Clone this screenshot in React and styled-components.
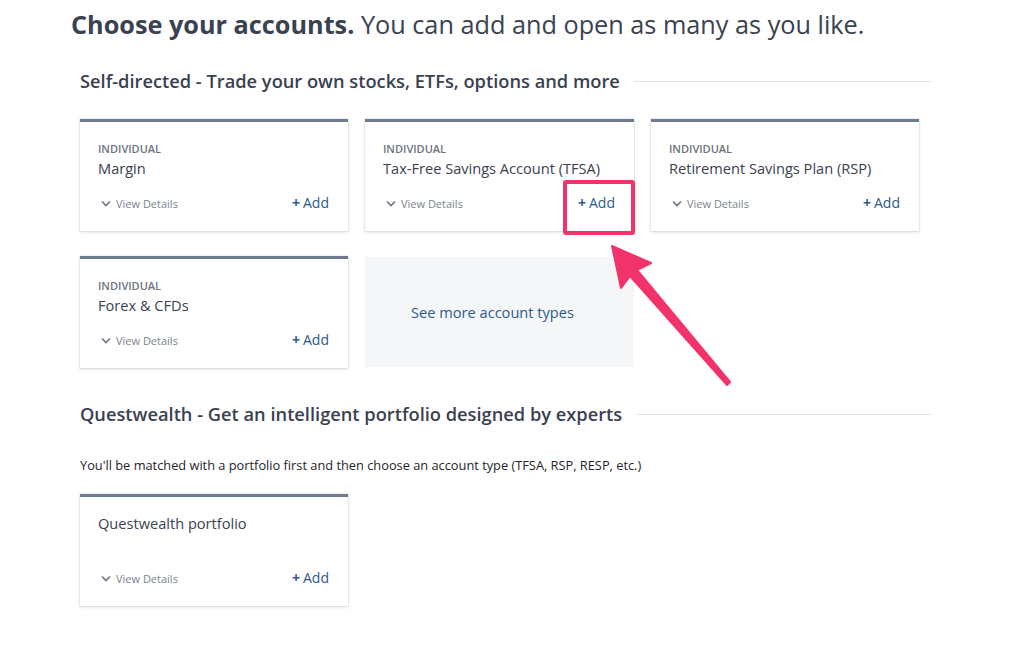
import styled, { createGlobalStyle } from "styled-components";

const GlobalStyle = createGlobalStyle`
  body {
    margin: 0;
    background: #fff;
    font-family: "Open Sans", "Liberation Sans", sans-serif;
    color: #3a4150;
  }
`;

const Page = styled.div`
  position: relative;
  width: 1024px;
  height: 661px;
  overflow: hidden;
  padding-top: 7px;
  box-sizing: border-box;
`;

const Title = styled.h1`
  margin: 0 0 0 71px;
  font-size: 25.25px;
  line-height: 34px;
  font-weight: 400;
  color: #3a4150;

  b {
    font-weight: 700;
  }
`;

const Section = styled.section`
  width: 852px;
  margin-left: 80px;
  margin-top: ${(p) => p.top}px;
`;

const HeadRow = styled.div`
  display: flex;
  align-items: center;
  gap: 14px;
`;

const Heading = styled.h2`
  margin: 0;
  font-size: 18.25px;
  line-height: 26px;
  font-weight: 600;
  color: #3a4150;
  white-space: nowrap;
`;

const Rule = styled.div`
  flex: 1;
  height: 1px;
  background: #e3e5e8;
`;

const Grid = styled.div`
  display: grid;
  grid-template-columns: 268px 269px 268px;
  column-gap: 17px;
  row-gap: 25px;
  margin-top: ${(p) => p.top}px;
`;

const Card = styled.div`
  position: relative;
  height: 112px;
  box-sizing: border-box;
  border-top: 3px solid #6d7b8e;
  background: #fff;
  box-shadow: 0 1px 3px rgba(40, 50, 70, 0.18), 0 0 0 1px rgba(40, 50, 70, 0.05);
  padding: ${(p) => p.padTop}px 19px 16px 18px;
  display: flex;
  flex-direction: column;
`;

const Label = styled.div`
  font-size: 11px;
  line-height: 16px;
  font-weight: 600;
  color: #6c7480;
  text-transform: uppercase;
`;

const Name = styled.div`
  font-size: 14.6px;
  line-height: 22px;
  color: #3a4150;
  white-space: nowrap;
`;

const Footer = styled.div`
  margin-top: auto;
  display: flex;
  align-items: center;
  justify-content: space-between;
  height: 24px;
`;

const Details = styled.div`
  display: flex;
  align-items: center;
  gap: 5px;
  padding-left: 3px;
  font-size: 11px;
  color: #7b838f;
`;

const Add = styled.div`
  position: relative;
  font-size: 14px;
  line-height: 24px;
  color: #2c5a8c;

  span {
    font-weight: 700;
    margin-right: 3px;
  }

  ${(p) =>
    p.highlight &&
    `
    &::after {
      content: "";
      position: absolute;
      left: -15px;
      right: -20px;
      top: -11px;
      bottom: -20px;
      border: 4px solid #f2336b;
      border-radius: 3px;
    }
  `}
`;

const MoreBox = styled.div`
  height: 110px;
  margin-top: 1px;
  padding-right: 14px;
  background: #f5f6f8;
  display: flex;
  align-items: center;
  justify-content: center;
  font-size: 14.6px;
  color: #2c5a8c;
`;

const Note = styled.p`
  margin: 28px 0 0;
  font-size: 12.8px;
  line-height: 20px;
  color: #1f232a;
`;

const Arrow = styled.svg`
  position: absolute;
  left: 0;
  top: 0;
  pointer-events: none;
`;

const Chevron = () => (
  <svg width="10" height="7" viewBox="0 0 10 7">
    <polyline points="1,1.5 5,5.5 9,1.5" fill="none" stroke="#6c7480" strokeWidth="1.6" />
  </svg>
);

function AccountCard({ label, name, highlight, padTop = 19 }) {
  return (
    <Card padTop={padTop}>
      {label && <Label>{label}</Label>}
      <Name>{name}</Name>
      <Footer>
        <Details>
          <Chevron />
          View Details
        </Details>
        <Add highlight={highlight}>
          <span>+</span>Add
        </Add>
      </Footer>
    </Card>
  );
}

export default function App() {
  return (
    <>
      <GlobalStyle />
      <Page>
        <Title>
          <b>Choose your accounts.</b> You can add and open as many as you like.
        </Title>

        <Section top={27}>
          <HeadRow>
            <Heading>Self-directed - Trade your own stocks, ETFs, options and more</Heading>
            <Rule />
          </HeadRow>
          <Grid top={25}>
            <AccountCard label="Individual" name="Margin" />
            <AccountCard label="Individual" name="Tax-Free Savings Account (TFSA)" highlight />
            <AccountCard label="Individual" name="Retirement Savings Plan (RSP)" />
            <AccountCard label="Individual" name="Forex & CFDs" />
            <MoreBox>See more account types</MoreBox>
          </Grid>
        </Section>

        <Section top={33}>
          <HeadRow>
            <Heading>Questwealth - Get an intelligent portfolio designed by experts</Heading>
            <Rule />
          </HeadRow>
          <Note>You'll be matched with a portfolio first and then choose an account type (TFSA, RSP, RESP, etc.)</Note>
          <Grid top={19}>
            <AccountCard name="Questwealth portfolio" padTop={15} />
          </Grid>
        </Section>

        <Arrow width="1024" height="661" viewBox="0 0 1024 661">
          <polygon
            points="612,246 651,263 637,270 730,382 727,385 630,276 621,288"
            fill="#f2336b"
            strokeLinejoin="round"
            stroke="#f2336b"
            strokeWidth="2"
          />
        </Arrow>
      </Page>
    </>
  );
}
